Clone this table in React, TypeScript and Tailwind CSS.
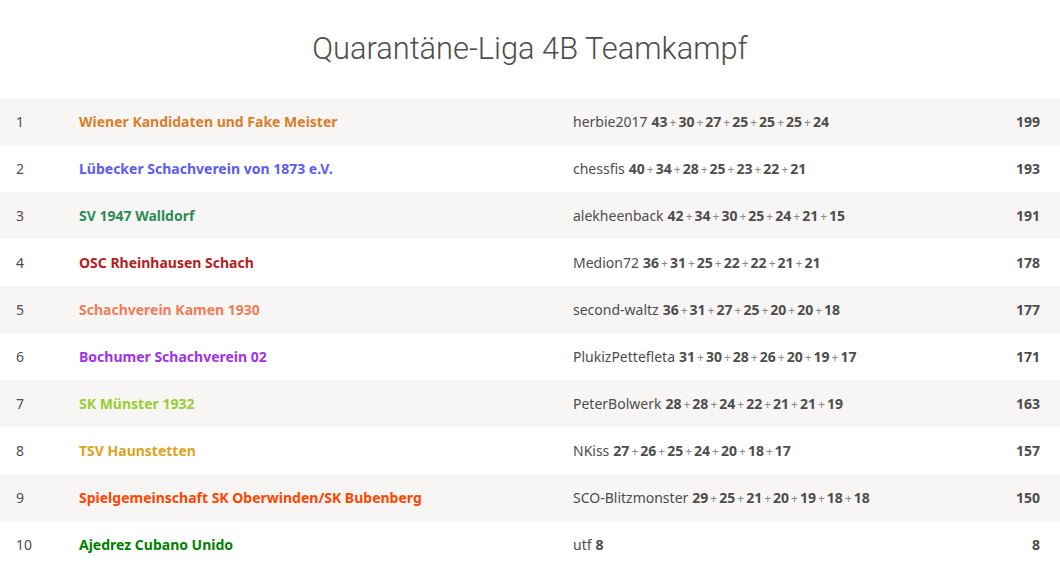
import React from "react";

type Row = { rank: number; team: string; color: string; player: string; scores: number[]; total: number };

const rows: Row[] = [
  { rank: 1, team: "Wiener Kandidaten und Fake Meister", color: "text-[#d77f2b]", player: "herbie2017", scores: [43, 30, 27, 25, 25, 25, 24], total: 199 },
  { rank: 2, team: "Lübecker Schachverein von 1873 e.V.", color: "text-[#5c5cf0]", player: "chessfis", scores: [40, 34, 28, 25, 23, 22, 21], total: 193 },
  { rank: 3, team: "SV 1947 Walldorf", color: "text-[#2e8b57]", player: "alekheenback", scores: [42, 34, 30, 25, 24, 21, 15], total: 191 },
  { rank: 4, team: "OSC Rheinhausen Schach", color: "text-[#b22222]", player: "Medion72", scores: [36, 31, 25, 22, 22, 21, 21], total: 178 },
  { rank: 5, team: "Schachverein Kamen 1930", color: "text-[#ef7d5c]", player: "second-waltz", scores: [36, 31, 27, 25, 20, 20, 18], total: 177 },
  { rank: 6, team: "Bochumer Schachverein 02", color: "text-[#a033e8]", player: "PlukizPettefleta", scores: [31, 30, 28, 26, 20, 19, 17], total: 171 },
  { rank: 7, team: "SK Münster 1932", color: "text-[#9acd32]", player: "PeterBolwerk", scores: [28, 28, 24, 22, 21, 21, 19], total: 163 },
  { rank: 8, team: "TSV Haunstetten", color: "text-[#daa520]", player: "NKiss", scores: [27, 26, 25, 24, 20, 18, 17], total: 157 },
  { rank: 9, team: "Spielgemeinschaft SK Oberwinden/SK Bubenberg", color: "text-[#ff4500]", player: "SCO-Blitzmonster", scores: [29, 25, 21, 20, 19, 18, 18], total: 150 },
  { rank: 10, team: "Ajedrez Cubano Unido", color: "text-[#008000]", player: "utf", scores: [8], total: 8 },
];

export default function App() {
  return (
    <div className="w-[1060px] h-[567px] bg-white overflow-hidden text-[#4d4d4d]" style={{ fontFamily: '"Noto Sans", sans-serif' }}>
      <div className="h-[98px] flex items-center justify-center">
        <h1 className="text-[30.8px] font-light text-[#4d4d4d] leading-none" style={{ fontFamily: "Roboto, sans-serif" }}>
          Quarantäne-Liga 4B Teamkampf
        </h1>
      </div>
      <div className="flex flex-col">
        {rows.map((r, i) => (
          <div key={r.rank} className={`h-[47px] flex items-center text-[14px] ${i % 2 === 0 ? "bg-[#f7f6f5]" : "bg-white"}`}>
            <div className="w-[79px] pl-4">{r.rank}</div>
            <div className={`w-[494px] font-bold ${r.color}`}>{r.team}</div>
            <div className="flex-1 flex items-baseline whitespace-nowrap">
              <span>{r.player}</span>
              <span className="ml-[4px] flex items-baseline">
                {r.scores.map((s, j) => (
                  <React.Fragment key={j}>
                    {j > 0 && <span className="text-[12px] text-[#888888] px-[2px]">+</span>}
                    <span className="font-bold">{s}</span>
                  </React.Fragment>
                ))}
              </span>
            </div>
            <div className="pr-5 font-bold text-right">{r.total}</div>
          </div>
        ))}
      </div>
    </div>
  );
}
